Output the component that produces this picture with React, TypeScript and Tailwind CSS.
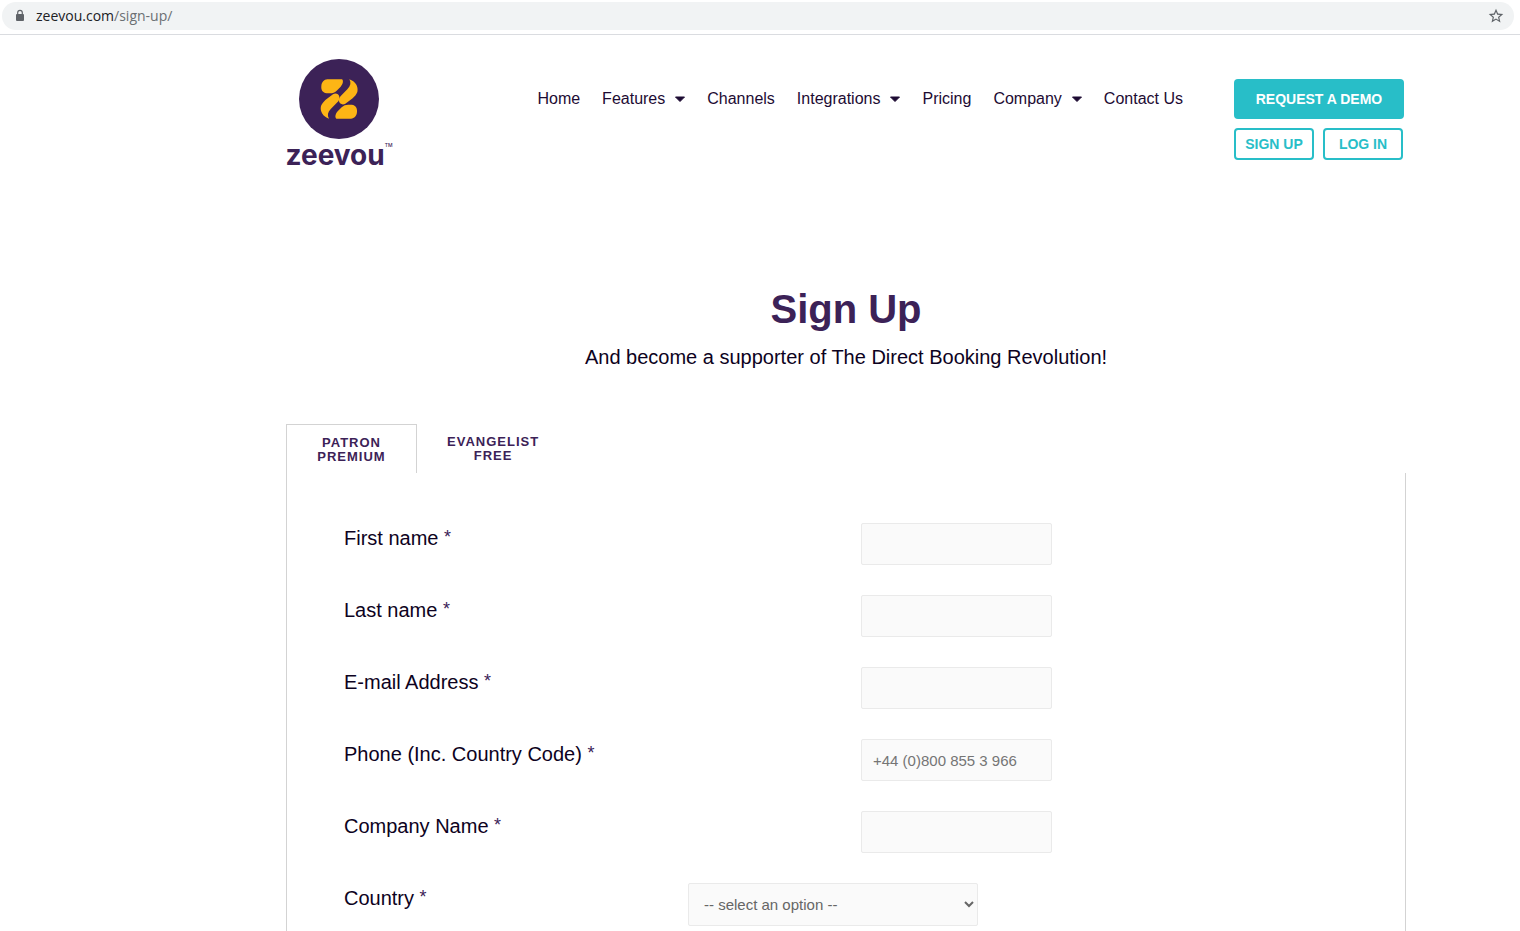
const fields = [
  { id: 'first', label: 'First name' },
  { id: 'last', label: 'Last name' },
  { id: 'email', label: 'E-mail Address', type: 'email' },
  { id: 'phone', label: 'Phone (Inc. Country Code)', type: 'tel', placeholder: '+44 (0)800 855 3 966' },
  { id: 'company', label: 'Company Name' },
];

const links = [
  { label: 'Home' },
  { label: 'Features', menu: true },
  { label: 'Channels' },
  { label: 'Integrations', menu: true },
  { label: 'Pricing' },
  { label: 'Company', menu: true },
  { label: 'Contact Us' },
];

function AddressBar() {
  return (
    <div className="border-b border-[#dadce0] pt-0.5 pr-1.5 pb-1 pl-0.5">
      <div className="flex h-7 items-center rounded-full bg-[#f1f3f4] pr-2.5 pl-3">
        <svg width="12" height="14" viewBox="0 0 12 14" className="text-[#5f6368]" aria-hidden="true">
          <rect x="2" y="5" width="8" height="7" rx="1" fill="currentColor" />
          <path d="M3.7 5.5V3.6a2.3 2.3 0 0 1 4.6 0v1.9" fill="none" stroke="currentColor" strokeWidth="1.2" />
        </svg>
        <span className="ml-2.5 flex-1 font-['Open_Sans',sans-serif] text-sm text-[#202124]">
          zeevou.com<span className="text-[#6b6f73]">/sign-up/</span>
        </span>
        <button aria-label="Bookmark this page" className="text-[#5f6368]">
          <svg width="16" height="16" viewBox="1 1 22 22" fill="currentColor" aria-hidden="true">
            <path d="M22 9.24l-7.19-.62L12 2 9.19 8.63 2 9.24l5.46 4.73L5.82 21 12 17.27 18.18 21l-1.63-7.03L22 9.24zM12 15.4l-3.76 2.27 1-4.28-3.32-2.88 4.38-.38L12 6.1l1.71 4.04 4.38.38-3.32 2.88 1 4.28L12 15.4z" />
          </svg>
        </button>
      </div>
    </div>
  );
}

const EMBLEM_PILL = 'M52 28H96C101 32 99 42 92 50L80 62C74 68 68 70 60 70H50C36 68 33 58 34 48C35 36 42 29 52 28Z';
const EMBLEM_CURVE = 'M118 28C136 34 146 50 142 66C139 74 134 79 128 85L106 101C98 106 89 102 87 94C86 87 88 82 93 77L112 58C122 48 124 38 118 28Z';

function Logo() {
  return (
    <a href="#" aria-label="Zeevou" className="flex w-[106px] flex-col items-center text-[#3c2257]">
      <svg width="80" height="80" viewBox="0 0 240 240" aria-hidden="true">
        <circle cx="120" cy="120" r="120" fill="#3c2257" />
        <g fill="#fdb515" transform="translate(33 33)">
          <path d={EMBLEM_PILL} />
          <path d={EMBLEM_CURVE} />
          <g transform="rotate(180 87.5 87)">
            <path d={EMBLEM_PILL} />
            <path d={EMBLEM_CURVE} />
          </g>
        </g>
      </svg>
      <span className="flex items-start font-['Inter',sans-serif] text-[28px] leading-8 font-bold">
        zeevou
        <span className="text-[5px] leading-3 font-medium">TM</span>
      </span>
    </a>
  );
}

function Header() {
  return (
    <header className="flex items-start pt-6">
      <Logo />
      <nav className="mr-[51px] ml-auto flex items-center gap-[22px] pt-7 text-base leading-6 text-[#1d0b33]">
        {links.map((l) => (
          <a key={l.label} href="#" className="flex items-center gap-2.5 whitespace-nowrap">
            {l.label}
            {l.menu && (
              <svg width="10" height="6" viewBox="0 0 10 6" aria-hidden="true">
                <path d="M0.500 1H9.500L5 5.500Z" fill="currentColor" stroke="currentColor" strokeLinejoin="round" />
              </svg>
            )}
          </a>
        ))}
      </nav>
      <div className="mt-5 mr-0.5 grid w-[170px] grid-cols-[80px_80px] gap-[9px] text-sm font-bold">
        <a href="#" className="col-span-2 flex h-10 w-[170px] items-center justify-center rounded bg-[#28bec8] text-white">REQUEST A DEMO</a>
        <a href="#" className="flex h-8 items-center justify-center rounded border-2 border-[#28bec8] text-[#28bec8]">SIGN UP</a>
        <a href="#" className="flex h-8 items-center justify-center rounded border-2 border-[#28bec8] text-[#28bec8]">LOG IN</a>
      </div>
    </header>
  );
}

export default function App() {
  return (
    <div className="h-screen overflow-hidden bg-white font-['Liberation_Sans',Arial,sans-serif] text-[#0d0221]">
      <AddressBar />
      <div className="pl-[172px]">
        <div className="mx-auto max-w-[1120px]">
          <Header />
          <main>
            <div className="mt-27 text-center">
              <h1 className="text-[40px] leading-[60px] font-bold text-[#3c2257]">Sign Up</h1>
              <p className="mt-1 text-xl leading-7">And become a supporter of The Direct Booking Revolution!</p>
            </div>
            <div role="tablist" className="mt-[53px] flex text-[13px] leading-[14px] font-bold tracking-[1px] text-[#3c2257]">
              <button role="tab" aria-selected="true" className="h-[49px] w-[131px] border border-b-0 border-[#d3d3d3] px-6 pt-0.5">PATRON PREMIUM</button>
              <button role="tab" aria-selected="false" className="h-[49px] px-[30px]">EVANGELIST<br />FREE</button>
            </div>
            <form className="flex flex-col gap-[30px] border-x border-[#d3d3d3] px-[57px] pt-[50px] pb-16">
              {fields.map((f) => (
                <div key={f.id} className="grid grid-cols-2 items-start">
                  <label htmlFor={f.id} className="text-xl leading-[30px]">
                    {f.label} <span className="align-[2px] text-lg leading-none text-[#3c2257]">*</span>
                  </label>
                  <input
                    id={f.id}
                    type={f.type ?? 'text'}
                    placeholder={f.placeholder}
                    required
                    className="ml-[15px] h-[42px] w-[191px] rounded-xs border border-[#eaeaea] bg-[#fafafa] px-[11px] text-[15px] text-[#666] placeholder:text-[#757575]"
                  />
                </div>
              ))}
              <div className="flex items-start">
                <label htmlFor="country" className="w-[344px] text-xl leading-[30px]">
                  Country <span className="align-[2px] text-lg leading-none text-[#3c2257]">*</span>
                </label>
                <select id="country" className="h-[43px] w-[290px] rounded-xs border border-[#eaeaea] bg-[#fafafa] px-[11px] text-[15px] text-[#666]">
                  <option>-- select an option --</option>
                </select>
              </div>
            </form>
          </main>
        </div>
      </div>
    </div>
  );
}
